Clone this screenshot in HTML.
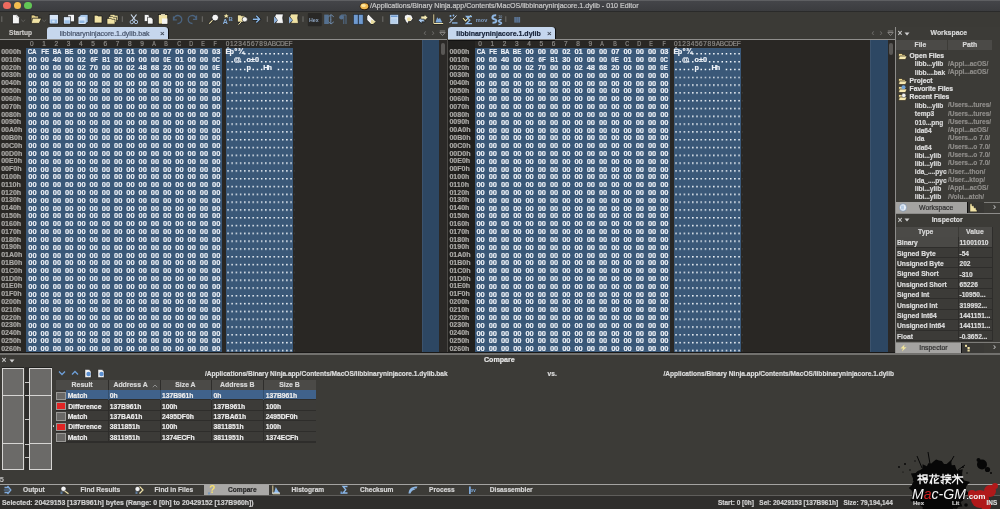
<!DOCTYPE html><html><head><meta charset='utf-8'><style>
*{margin:0;padding:0;box-sizing:border-box}
html,body{width:1000px;height:509px;overflow:hidden;background:#3c3b37}
body{position:relative;will-change:transform;font-family:"Liberation Sans",sans-serif;color:#d8d8d8}
.a{position:absolute}
.t{position:absolute;white-space:pre;line-height:1;-webkit-text-stroke-width:0.2px}
.hx i{display:inline-block;text-align:center;font-style:normal}
.hc i{width:12.26px}
.ac i{width:4.21px}
.hc i.n{transform:scaleX(.82)}
</style></head><body><div class="a" style="left:0.00px;top:0.00px;width:1000.00px;height:11.00px;background:linear-gradient(#45464a,#3b3c3f)"></div>
<div class="a" style="left:0.00px;top:0.00px;width:1000.00px;height:0.70px;background:#5e5f62"></div>
<div class="a" style="left:0.00px;top:10.60px;width:1000.00px;height:1.00px;background:#2a2a2a"></div>
<div class="a" style="left:3.40px;top:1.90px;width:7.20px;height:7.20px;background:#ee6a5f;border-radius:50%"></div>
<div class="a" style="left:13.90px;top:1.90px;width:7.20px;height:7.20px;background:#f5be4f;border-radius:50%"></div>
<div class="a" style="left:24.40px;top:1.90px;width:7.20px;height:7.20px;background:#62c655;border-radius:50%"></div>
<svg class="a" style="left:358.50px;top:1.50px;" width="11" height="9" viewBox="0 0 11 9"><ellipse cx="5.5" cy="4.5" rx="4.8" ry="3.8" fill="#2a1a08"/><ellipse cx="5.3" cy="4.3" rx="4" ry="3" fill="#f0b850"/><ellipse cx="4.5" cy="3.6" rx="2.2" ry="1.5" fill="#fde7a0"/></svg>
<div class="t" style="left:370.00px;top:2.72px;font-size:7.1px;color:#c9c9c9;">/Applications/Binary Ninja.app/Contents/MacOS/libbinaryninjacore.1.dylib - 010 Editor</div>
<div class="a" style="left:0.00px;top:11.50px;width:1000.00px;height:15.00px;background:#3b3a36"></div>
<div class="a" style="left:0.00px;top:26.50px;width:896.00px;height:13.00px;background:#3b3a36"></div>
<svg class="a" style="left:0;top:11px" width="530" height="16" viewBox="0 11 530 16"><rect x="1.3" y="16.3" width="1" height="5.6" fill="#6f6e6b"/><path d="M12.5 14.6 H16.8 L19.4 17.2 V23.8 H12.5 Z" fill="#f4f4f4" stroke="#141414" stroke-width="0.7"/><path d="M16.8 14.6 V17.2 H19.4" fill="none" stroke="#999" stroke-width="0.5"/><path d="M21.2 19.7 L23.2 21.6 L25.2 19.7" fill="none" stroke="#6c6b69" stroke-width="0.7"/><path d="M31.2 15 H34.3 L35.3 16 H38.6 V23.3 H31.2 Z" fill="#e4d08a" stroke="#141414" stroke-width="0.7"/><path d="M32.6 18.2 H41.6 L39.2 23.4 H31.2 Z" fill="#f0e2a4" stroke="#141414" stroke-width="0.7"/><path d="M42.2 19.7 L44.2 21.6 L46.2 19.7" fill="none" stroke="#6c6b69" stroke-width="0.7"/><rect x="49.2" y="14.4" width="9.2" height="9.5" fill="#d6e5f6" stroke="#141414" stroke-width="0.7"/><rect x="50.5" y="19.5" width="6.6" height="3.8" fill="#9cc0e8"/><rect x="52.2" y="20.5" width="2.5" height="2" fill="#d6e5f6"/><rect x="67.8" y="14.3" width="6.5" height="7.5" fill="#f4f4f4" stroke="#141414" stroke-width="0.6"/><rect x="63.5" y="16.8" width="7.2" height="7.2" fill="#d6e5f6" stroke="#141414" stroke-width="0.6"/><rect x="64.5" y="20.3" width="5.2" height="3" fill="#9cc0e8"/><path d="M78.5 17 L81 14.5 H88 V21.5 L85.5 24 H78.5 Z" fill="#a9c8ea" stroke="#141414" stroke-width="0.6"/><rect x="78.5" y="17" width="7" height="7" fill="#d6e5f6"/><rect x="79.5" y="20.5" width="5" height="2.5" fill="#8fb6e2"/><path d="M94.2 15.2 H97.2 L98 16 H102 V23 H94.2 Z" fill="#f0e2a4" stroke="#141414" stroke-width="0.7"/><path d="M110 14.4 H114 L115 15.3 H118 V20.5 H110 Z" fill="#f0e2a4" stroke="#141414" stroke-width="0.6"/><path d="M108.5 16.4 H112.5 L113.5 17.3 H116.5 V22.5 H108.5 Z" fill="#f0e2a4" stroke="#141414" stroke-width="0.6"/><path d="M107 18.4 H111 L112 19.3 H115 V24.2 H107 Z" fill="#f0e2a4" stroke="#141414" stroke-width="0.6"/><rect x="121.8" y="16.3" width="1" height="5.6" fill="#6f6e6b"/><path d="M131 14.5 L135.5 20.5 M136.5 14.5 L132 20.5" stroke="#c8d6e8" stroke-width="1.2"/><circle cx="131.8" cy="22" r="1.7" fill="none" stroke="#a6bcd8" stroke-width="1"/><circle cx="136" cy="22" r="1.7" fill="none" stroke="#a6bcd8" stroke-width="1"/><path d="M144.3 14.5 H148 L149.5 16 V21.5 H144.3 Z" fill="#f4f4f4" stroke="#141414" stroke-width="0.6"/><path d="M147.5 17.2 H151 L153 19.2 V24 H147.5 Z" fill="#f4f4f4" stroke="#141414" stroke-width="0.6"/><rect x="158.3" y="14.6" width="9.4" height="9.4" fill="#f0e2a4" stroke="#141414" stroke-width="0.7"/><rect x="162" y="18.5" width="5.4" height="5.3" fill="#f4f4f4"/><rect x="161" y="14" width="4" height="1.6" fill="#d8d0b0"/><path d="M173.5 16.5 L173.5 19.8 L176.8 19.8 M173.8 19.5 A4 4 0 1 1 177.5 23.5" fill="none" stroke="#4b6480" stroke-width="1.3"/><path d="M196.5 15.5 L196.5 19.3 L193 19.3 M196.2 19 A4 4 0 1 0 192.5 23.5" fill="none" stroke="#4b6480" stroke-width="1.3"/><rect x="201.8" y="16.3" width="1" height="5.6" fill="#6f6e6b"/><line x1="209.3" y1="23.6" x2="212.7" y2="20.2" stroke="#141414" stroke-width="2.2"/><line x1="209.3" y1="23.6" x2="212.7" y2="20.2" stroke="#efe2a8" stroke-width="1.2"/><circle cx="215.2" cy="17.6" r="3.4" fill="#f4f4f4" stroke="#141414" stroke-width="0.8"/><path d="M226.2 13.8 L227 15.3 L228.6 15.4 L227.4 16.4 L227.8 18 L226.2 17.1 L224.6 18 L225 16.4 L223.8 15.4 L225.4 15.3 Z" fill="#f2e6a8"/><text x="222.8" y="24.2" font-size="7" font-weight="bold" fill="#8ab2e0" font-family="Liberation Sans">A</text><text x="228.6" y="21.4" font-size="6" font-weight="bold" fill="#7aa0cc" font-family="Liberation Sans">B</text><path d="M237.5 15 H240.5 L241.3 15.8 H245 V22 H237.5 Z" fill="#f0e2a4" stroke="#141414" stroke-width="0.6"/><line x1="238.5" y1="24.5" x2="241.5" y2="21.5" stroke="#efe2a8" stroke-width="1"/><circle cx="244.8" cy="19.3" r="2.6" fill="#f4f4f4" stroke="#141414" stroke-width="0.6"/><path d="M252.5 19.2 H259.5 M256.3 15.8 L259.8 19.2 L256.3 22.6" fill="none" stroke="#141414" stroke-width="2.4"/><path d="M252.8 19.2 H259.3 M256.3 15.8 L259.6 19.2 L256.3 22.6" fill="none" stroke="#8cb8e8" stroke-width="1.4"/><rect x="266.8" y="16.3" width="1" height="5.6" fill="#6f6e6b"/><path d="M275.6 14 H283.4 L282.7 17.8 L283.5 23.4 H275.4 L277.4 20.3 L274.8 16.8 Z" fill="#f4f4f4" stroke="#141414" stroke-width="0.7"/><path d="M274.0 16.6 L277.6 20.3 L274.0 23.6 Z" fill="#8fb2dc"/><path d="M290.6 14 H298.4 L297.7 17.8 L298.5 23.4 H290.4 L292.4 20.3 L289.8 16.8 Z" fill="#f0e2a4" stroke="#141414" stroke-width="0.7"/><path d="M289.0 16.6 L292.6 20.3 L289.0 23.6 Z" fill="#8fb2dc"/><rect x="302.5" y="16.3" width="1" height="5.6" fill="#6f6e6b"/><rect x="307.8" y="13" width="14" height="13.2" rx="1" fill="#292826"/><text x="309" y="21.6" font-size="5.3" font-weight="bold" fill="#8ea4c0" font-family="Liberation Sans">Hex</text><rect x="324.2" y="14.6" width="4.6" height="9.4" fill="#55708f"/><path d="M328.5 16.8 L331 14.6 L333.8 16.8 M330.8 15 V19.5 M328.5 21.8 L331 24 L333.8 21.8 M330.8 23.6 V19" fill="none" stroke="#6c88a8" stroke-width="1"/><path d="M341.2 15 H346 V24 M343.8 15 V24" fill="none" stroke="#55708f" stroke-width="1"/><circle cx="341.5" cy="17.3" r="2.3" fill="#55708f"/><rect x="353.6" y="14.6" width="4.5" height="9.6" fill="#6f9ad0" stroke="#1a2636" stroke-width="0.5"/><rect x="358.6" y="14.6" width="4.5" height="9.6" fill="#6f9ad0" stroke="#1a2636" stroke-width="0.5"/><path d="M366.8 16 L368.6 14.3 L375.7 21.4 L373 24.1 L370.8 24.1 L366.8 20 Z" fill="#f4f4f4" stroke="#141414" stroke-width="0.7"/><path d="M371.2 19.5 L375.7 21.4 L373 24.1 L370.8 24.1 Z" fill="#e8dca0"/><rect x="382.3" y="16.3" width="1" height="5.6" fill="#6f6e6b"/><rect x="389.9" y="14.5" width="8.6" height="9.7" fill="#d6e5f6" stroke="#1a2636" stroke-width="0.6"/><rect x="390.8" y="15.4" width="6.8" height="1.8" fill="#6f9ad0"/><rect x="391" y="18.3" width="6.3" height="5" fill="#b7d0ec"/><path d="M404.5 15.5 L407.5 14.3 L411.5 15 L413 18.5 L411 21.5 L408.5 21.5 L407.5 24.3 L405.5 21.2 L404.3 18.5 Z" fill="#f4f4f4" stroke="#141414" stroke-width="0.7"/><circle cx="409" cy="19.3" r="2" fill="#f0e2a4"/><path d="M418.3 20.3 L421.8 16.8 V18.8 H425 V21.8 H421.8 V23.8 Z" fill="#a8c8ec" stroke="#141414" stroke-width="0.6"/><path d="M427.8 17.6 L424.3 14.1 V16.1 H420.8 V19.1 H424.3 V21.1 Z" fill="#f4eab4" stroke="#141414" stroke-width="0.6"/><path d="M433.8 14.3 V23.5 H443.2" fill="none" stroke="#141414" stroke-width="1.8"/><path d="M433.8 14.3 V23.5 H443.2" fill="none" stroke="#efe2a8" stroke-width="1"/><path d="M435.5 22.6 L437.2 17.2 L438.5 19 L440 18 L442.3 22.6 Z" fill="#7ea9da"/><path d="M449.5 23 L456.5 15.5" stroke="#c8d8ec" stroke-width="1"/><circle cx="450.5" cy="16" r="1" fill="#8cb8e8"/><circle cx="453.5" cy="15.5" r="0.9" fill="#8cb8e8"/><rect x="452" y="22.3" width="5.5" height="1.3" fill="#8cb8e8"/><circle cx="451" cy="19.5" r="0.9" fill="#8cb8e8"/><path d="M463 18.2 L465.5 20.8 L470.8 15.3" fill="none" stroke="#141414" stroke-width="2"/><path d="M463 18.2 L465.5 20.8 L470.8 15.3" fill="none" stroke="#f2e6a8" stroke-width="1.2"/><path d="M472 16.5 H466.5 L469.8 20.2 L466.3 23.7 H472" fill="none" stroke="#8cb8e8" stroke-width="1.3"/><text x="475.8" y="21.7" font-size="5.6" font-weight="bold" fill="#7f9fc8" font-family="Liberation Sans">mov</text><path d="M496.2 15.2 C491.5 15 491.5 18.5 494.5 19.3 C497.5 20 497 23 492.5 22.8" fill="none" stroke="#90b8e4" stroke-width="2"/><path d="M501.5 19.5 C498 19.5 498 21.8 500.2 22.2 C502.2 22.6 501.8 24.5 498.5 24.5" fill="none" stroke="#90b8e4" stroke-width="1.6"/><text x="498.2" y="17.6" font-size="3.6" fill="#8fb0d8" font-family="Liberation Sans">10</text><rect x="505.3" y="16.3" width="1" height="5.6" fill="#6f6e6b"/><rect x="514.3" y="17" width="5.8" height="5.6" fill="#5f7898"/><path d="M516.2 17 V22.6 M518.2 17 V22.6" stroke="#3a4a5c" stroke-width="0.5"/></svg>
<div class="a" style="left:47.00px;top:27.20px;width:121.40px;height:13.00px;background:#c6d7ee;border-radius:3px 3px 0 0;box-shadow:1px 0 0 #111"></div>
<div class="t" style="left:59.70px;top:30.07px;font-size:7.0px;color:#46536a;">libbinaryninjacore.1.dylib.bak</div>
<div class="t" style="left:159.90px;top:30.28px;font-size:8px;color:#3a4250;">×</div>
<div class="a" style="left:0.00px;top:39.30px;width:447.00px;height:1.00px;background:#8f8e8c"></div>
<div class="a" style="left:0.00px;top:40.30px;width:447.00px;height:312.20px;background:#292724"></div>
<div class="t hx" style="left:25.67px;top:40.81px;font-size:6.5px;color:#8c8a87"><span class="hc"><i>0</i><i>1</i><i>2</i><i>3</i><i>4</i><i>5</i><i>6</i><i>7</i><i>8</i><i>9</i><i class='n'>A</i><i class='n'>B</i><i class='n'>C</i><i class='n'>D</i><i class='n'>E</i><i class='n'>F</i></span></div>
<div class="t hx" style="left:225.40px;top:40.81px;font-size:6.5px;color:#8c8a87"><span class="ac"><i>0</i><i>1</i><i>2</i><i>3</i><i>4</i><i>5</i><i>6</i><i>7</i><i>8</i><i>9</i><i>A</i><i>B</i><i>C</i><i>D</i><i>E</i><i>F</i></span></div>
<div class="a" style="left:25.80px;top:47.70px;width:196.00px;height:304.59px;background:#3a5878"></div>
<div class="a" style="left:225.70px;top:47.70px;width:67.20px;height:304.59px;background:#3a5878"></div>
<div class="t" style="left:1.20px;top:48.00px;font-size:7.05px;line-height:7.805px;color:#aaa8a5;font-weight:bold">0000h<br>0010h<br>0020h<br>0030h<br>0040h<br>0050h<br>0060h<br>0070h<br>0080h<br>0090h<br>00A0h<br>00B0h<br>00C0h<br>00D0h<br>00E0h<br>00F0h<br>0100h<br>0110h<br>0120h<br>0130h<br>0140h<br>0150h<br>0160h<br>0170h<br>0180h<br>0190h<br>01A0h<br>01B0h<br>01C0h<br>01D0h<br>01E0h<br>01F0h<br>0200h<br>0210h<br>0220h<br>0230h<br>0240h<br>0250h<br>0260h</div>
<div class="t hx" style="left:26.30px;top:48.40px;font-size:7.5px;line-height:7.805px;color:#eef2f8;font-weight:bold;-webkit-text-stroke:0.15px #eef2f8"><span class="hc"><i class='n'>CA</i><i class='n'>FE</i><i class='n'>BA</i><i class='n'>BE</i><i>00</i><i>00</i><i>00</i><i>02</i><i>01</i><i>00</i><i>00</i><i>07</i><i>00</i><i>00</i><i>00</i><i>03</i></span><br><span class="hc"><i>00</i><i>00</i><i>40</i><i>00</i><i>02</i><i class='n'>6F</i><i class='n'>B1</i><i>30</i><i>00</i><i>00</i><i>00</i><i class='n'>0E</i><i>01</i><i>00</i><i>00</i><i class='n'>0C</i></span><br><span class="hc"><i>00</i><i>00</i><i>00</i><i>00</i><i>02</i><i>70</i><i>00</i><i>00</i><i>02</i><i>48</i><i>68</i><i>20</i><i>00</i><i>00</i><i>00</i><i class='n'>0E</i></span><br><span class="hc"><i>00</i><i>00</i><i>00</i><i>00</i><i>00</i><i>00</i><i>00</i><i>00</i><i>00</i><i>00</i><i>00</i><i>00</i><i>00</i><i>00</i><i>00</i><i>00</i></span><br><span class="hc"><i>00</i><i>00</i><i>00</i><i>00</i><i>00</i><i>00</i><i>00</i><i>00</i><i>00</i><i>00</i><i>00</i><i>00</i><i>00</i><i>00</i><i>00</i><i>00</i></span><br><span class="hc"><i>00</i><i>00</i><i>00</i><i>00</i><i>00</i><i>00</i><i>00</i><i>00</i><i>00</i><i>00</i><i>00</i><i>00</i><i>00</i><i>00</i><i>00</i><i>00</i></span><br><span class="hc"><i>00</i><i>00</i><i>00</i><i>00</i><i>00</i><i>00</i><i>00</i><i>00</i><i>00</i><i>00</i><i>00</i><i>00</i><i>00</i><i>00</i><i>00</i><i>00</i></span><br><span class="hc"><i>00</i><i>00</i><i>00</i><i>00</i><i>00</i><i>00</i><i>00</i><i>00</i><i>00</i><i>00</i><i>00</i><i>00</i><i>00</i><i>00</i><i>00</i><i>00</i></span><br><span class="hc"><i>00</i><i>00</i><i>00</i><i>00</i><i>00</i><i>00</i><i>00</i><i>00</i><i>00</i><i>00</i><i>00</i><i>00</i><i>00</i><i>00</i><i>00</i><i>00</i></span><br><span class="hc"><i>00</i><i>00</i><i>00</i><i>00</i><i>00</i><i>00</i><i>00</i><i>00</i><i>00</i><i>00</i><i>00</i><i>00</i><i>00</i><i>00</i><i>00</i><i>00</i></span><br><span class="hc"><i>00</i><i>00</i><i>00</i><i>00</i><i>00</i><i>00</i><i>00</i><i>00</i><i>00</i><i>00</i><i>00</i><i>00</i><i>00</i><i>00</i><i>00</i><i>00</i></span><br><span class="hc"><i>00</i><i>00</i><i>00</i><i>00</i><i>00</i><i>00</i><i>00</i><i>00</i><i>00</i><i>00</i><i>00</i><i>00</i><i>00</i><i>00</i><i>00</i><i>00</i></span><br><span class="hc"><i>00</i><i>00</i><i>00</i><i>00</i><i>00</i><i>00</i><i>00</i><i>00</i><i>00</i><i>00</i><i>00</i><i>00</i><i>00</i><i>00</i><i>00</i><i>00</i></span><br><span class="hc"><i>00</i><i>00</i><i>00</i><i>00</i><i>00</i><i>00</i><i>00</i><i>00</i><i>00</i><i>00</i><i>00</i><i>00</i><i>00</i><i>00</i><i>00</i><i>00</i></span><br><span class="hc"><i>00</i><i>00</i><i>00</i><i>00</i><i>00</i><i>00</i><i>00</i><i>00</i><i>00</i><i>00</i><i>00</i><i>00</i><i>00</i><i>00</i><i>00</i><i>00</i></span><br><span class="hc"><i>00</i><i>00</i><i>00</i><i>00</i><i>00</i><i>00</i><i>00</i><i>00</i><i>00</i><i>00</i><i>00</i><i>00</i><i>00</i><i>00</i><i>00</i><i>00</i></span><br><span class="hc"><i>00</i><i>00</i><i>00</i><i>00</i><i>00</i><i>00</i><i>00</i><i>00</i><i>00</i><i>00</i><i>00</i><i>00</i><i>00</i><i>00</i><i>00</i><i>00</i></span><br><span class="hc"><i>00</i><i>00</i><i>00</i><i>00</i><i>00</i><i>00</i><i>00</i><i>00</i><i>00</i><i>00</i><i>00</i><i>00</i><i>00</i><i>00</i><i>00</i><i>00</i></span><br><span class="hc"><i>00</i><i>00</i><i>00</i><i>00</i><i>00</i><i>00</i><i>00</i><i>00</i><i>00</i><i>00</i><i>00</i><i>00</i><i>00</i><i>00</i><i>00</i><i>00</i></span><br><span class="hc"><i>00</i><i>00</i><i>00</i><i>00</i><i>00</i><i>00</i><i>00</i><i>00</i><i>00</i><i>00</i><i>00</i><i>00</i><i>00</i><i>00</i><i>00</i><i>00</i></span><br><span class="hc"><i>00</i><i>00</i><i>00</i><i>00</i><i>00</i><i>00</i><i>00</i><i>00</i><i>00</i><i>00</i><i>00</i><i>00</i><i>00</i><i>00</i><i>00</i><i>00</i></span><br><span class="hc"><i>00</i><i>00</i><i>00</i><i>00</i><i>00</i><i>00</i><i>00</i><i>00</i><i>00</i><i>00</i><i>00</i><i>00</i><i>00</i><i>00</i><i>00</i><i>00</i></span><br><span class="hc"><i>00</i><i>00</i><i>00</i><i>00</i><i>00</i><i>00</i><i>00</i><i>00</i><i>00</i><i>00</i><i>00</i><i>00</i><i>00</i><i>00</i><i>00</i><i>00</i></span><br><span class="hc"><i>00</i><i>00</i><i>00</i><i>00</i><i>00</i><i>00</i><i>00</i><i>00</i><i>00</i><i>00</i><i>00</i><i>00</i><i>00</i><i>00</i><i>00</i><i>00</i></span><br><span class="hc"><i>00</i><i>00</i><i>00</i><i>00</i><i>00</i><i>00</i><i>00</i><i>00</i><i>00</i><i>00</i><i>00</i><i>00</i><i>00</i><i>00</i><i>00</i><i>00</i></span><br><span class="hc"><i>00</i><i>00</i><i>00</i><i>00</i><i>00</i><i>00</i><i>00</i><i>00</i><i>00</i><i>00</i><i>00</i><i>00</i><i>00</i><i>00</i><i>00</i><i>00</i></span><br><span class="hc"><i>00</i><i>00</i><i>00</i><i>00</i><i>00</i><i>00</i><i>00</i><i>00</i><i>00</i><i>00</i><i>00</i><i>00</i><i>00</i><i>00</i><i>00</i><i>00</i></span><br><span class="hc"><i>00</i><i>00</i><i>00</i><i>00</i><i>00</i><i>00</i><i>00</i><i>00</i><i>00</i><i>00</i><i>00</i><i>00</i><i>00</i><i>00</i><i>00</i><i>00</i></span><br><span class="hc"><i>00</i><i>00</i><i>00</i><i>00</i><i>00</i><i>00</i><i>00</i><i>00</i><i>00</i><i>00</i><i>00</i><i>00</i><i>00</i><i>00</i><i>00</i><i>00</i></span><br><span class="hc"><i>00</i><i>00</i><i>00</i><i>00</i><i>00</i><i>00</i><i>00</i><i>00</i><i>00</i><i>00</i><i>00</i><i>00</i><i>00</i><i>00</i><i>00</i><i>00</i></span><br><span class="hc"><i>00</i><i>00</i><i>00</i><i>00</i><i>00</i><i>00</i><i>00</i><i>00</i><i>00</i><i>00</i><i>00</i><i>00</i><i>00</i><i>00</i><i>00</i><i>00</i></span><br><span class="hc"><i>00</i><i>00</i><i>00</i><i>00</i><i>00</i><i>00</i><i>00</i><i>00</i><i>00</i><i>00</i><i>00</i><i>00</i><i>00</i><i>00</i><i>00</i><i>00</i></span><br><span class="hc"><i>00</i><i>00</i><i>00</i><i>00</i><i>00</i><i>00</i><i>00</i><i>00</i><i>00</i><i>00</i><i>00</i><i>00</i><i>00</i><i>00</i><i>00</i><i>00</i></span><br><span class="hc"><i>00</i><i>00</i><i>00</i><i>00</i><i>00</i><i>00</i><i>00</i><i>00</i><i>00</i><i>00</i><i>00</i><i>00</i><i>00</i><i>00</i><i>00</i><i>00</i></span><br><span class="hc"><i>00</i><i>00</i><i>00</i><i>00</i><i>00</i><i>00</i><i>00</i><i>00</i><i>00</i><i>00</i><i>00</i><i>00</i><i>00</i><i>00</i><i>00</i><i>00</i></span><br><span class="hc"><i>00</i><i>00</i><i>00</i><i>00</i><i>00</i><i>00</i><i>00</i><i>00</i><i>00</i><i>00</i><i>00</i><i>00</i><i>00</i><i>00</i><i>00</i><i>00</i></span><br><span class="hc"><i>00</i><i>00</i><i>00</i><i>00</i><i>00</i><i>00</i><i>00</i><i>00</i><i>00</i><i>00</i><i>00</i><i>00</i><i>00</i><i>00</i><i>00</i><i>00</i></span><br><span class="hc"><i>00</i><i>00</i><i>00</i><i>00</i><i>00</i><i>00</i><i>00</i><i>00</i><i>00</i><i>00</i><i>00</i><i>00</i><i>00</i><i>00</i><i>00</i><i>00</i></span><br><span class="hc"><i>00</i><i>00</i><i>00</i><i>00</i><i>00</i><i>00</i><i>00</i><i>00</i><i>00</i><i>00</i><i>00</i><i>00</i><i>00</i><i>00</i><i>00</i><i>00</i></span></div>
<div class="t hx" style="left:225.40px;top:48.30px;font-size:7.3px;line-height:7.805px;color:#eef2f8;font-weight:bold"><span class="ac"><i>&Ecirc;</i><i>&thorn;</i><i>&ordm;</i><i>&frac34;</i><i></i><i></i><i></i><i></i><i></i><i></i><i></i><i></i><i></i><i></i><i></i><i></i></span><br><span class="ac"><i></i><i></i><i>@</i><i></i><i></i><i>o</i><i>&plusmn;</i><i>0</i><i></i><i></i><i></i><i></i><i></i><i></i><i></i><i></i></span><br><span class="ac"><i></i><i></i><i></i><i></i><i></i><i>p</i><i></i><i></i><i></i><i>H</i><i>h</i><i>&nbsp;</i><i></i><i></i><i></i><i></i></span></div>
<svg class="a" style="left:0.00px;top:0" width="300" height="360" viewBox="0 0 300 360"><defs><pattern id="dots0" patternUnits="userSpaceOnUse" x="227.2" y="53.10" width="4.21" height="7.805"><rect width="1.5" height="1.5" fill="#f4f8fc"/></pattern></defs><path d="M244.04 53.10h1.5v1.5h-1.5zM248.25 53.10h1.5v1.5h-1.5zM252.46 53.10h1.5v1.5h-1.5zM256.67 53.10h1.5v1.5h-1.5zM260.88 53.10h1.5v1.5h-1.5zM265.09 53.10h1.5v1.5h-1.5zM269.30 53.10h1.5v1.5h-1.5zM273.51 53.10h1.5v1.5h-1.5zM277.72 53.10h1.5v1.5h-1.5zM281.93 53.10h1.5v1.5h-1.5zM286.14 53.10h1.5v1.5h-1.5zM290.35 53.10h1.5v1.5h-1.5zM227.20 60.91h1.5v1.5h-1.5zM231.41 60.91h1.5v1.5h-1.5zM239.83 60.91h1.5v1.5h-1.5zM244.04 60.91h1.5v1.5h-1.5zM260.88 60.91h1.5v1.5h-1.5zM265.09 60.91h1.5v1.5h-1.5zM269.30 60.91h1.5v1.5h-1.5zM273.51 60.91h1.5v1.5h-1.5zM277.72 60.91h1.5v1.5h-1.5zM281.93 60.91h1.5v1.5h-1.5zM286.14 60.91h1.5v1.5h-1.5zM290.35 60.91h1.5v1.5h-1.5zM227.20 68.71h1.5v1.5h-1.5zM231.41 68.71h1.5v1.5h-1.5zM235.62 68.71h1.5v1.5h-1.5zM239.83 68.71h1.5v1.5h-1.5zM244.04 68.71h1.5v1.5h-1.5zM252.46 68.71h1.5v1.5h-1.5zM256.67 68.71h1.5v1.5h-1.5zM260.88 68.71h1.5v1.5h-1.5zM277.72 68.71h1.5v1.5h-1.5zM281.93 68.71h1.5v1.5h-1.5zM286.14 68.71h1.5v1.5h-1.5zM290.35 68.71h1.5v1.5h-1.5z" fill="#f4f8fc"/><rect x="227.2" y="76.52" width="67" height="280.98" fill="url(#dots0)"/></svg>
<div class="a" style="left:421.80px;top:40.30px;width:17.50px;height:312.20px;background:#2d4763;border-left:1px solid #3c536d"></div>
<div class="a" style="left:439.30px;top:40.30px;width:8.00px;height:312.20px;background:#2b2927"></div>
<div class="a" style="left:440.80px;top:43.00px;width:4.00px;height:12.40px;background:#5a5856;border-radius:2px"></div>
<div class="a" style="left:446.90px;top:40.30px;width:1.00px;height:312.00px;background:#4a4845"></div>
<div class="a" style="left:0.00px;top:352.30px;width:448.00px;height:1.00px;background:#1a1918"></div>
<div class="a" style="left:448.20px;top:27.20px;width:107.20px;height:13.00px;background:#c6d7ee;border-radius:3px 3px 0 0;box-shadow:1px 0 0 #111"></div>
<div class="t" style="left:456.30px;top:30.07px;font-size:7.0px;color:#18243a;font-weight:bold;">libbinaryninjacore.1.dylib</div>
<div class="t" style="left:546.90px;top:30.28px;font-size:8px;color:#3a4250;">×</div>
<div class="a" style="left:448.20px;top:39.30px;width:447.00px;height:1.00px;background:#8f8e8c"></div>
<div class="a" style="left:448.20px;top:40.30px;width:447.00px;height:312.20px;background:#292724"></div>
<div class="t hx" style="left:473.87px;top:40.81px;font-size:6.5px;color:#8c8a87"><span class="hc"><i>0</i><i>1</i><i>2</i><i>3</i><i>4</i><i>5</i><i>6</i><i>7</i><i>8</i><i>9</i><i class='n'>A</i><i class='n'>B</i><i class='n'>C</i><i class='n'>D</i><i class='n'>E</i><i class='n'>F</i></span></div>
<div class="t hx" style="left:673.60px;top:40.81px;font-size:6.5px;color:#8c8a87"><span class="ac"><i>0</i><i>1</i><i>2</i><i>3</i><i>4</i><i>5</i><i>6</i><i>7</i><i>8</i><i>9</i><i>A</i><i>B</i><i>C</i><i>D</i><i>E</i><i>F</i></span></div>
<div class="a" style="left:474.00px;top:47.70px;width:196.00px;height:304.59px;background:#3a5878"></div>
<div class="a" style="left:673.90px;top:47.70px;width:67.20px;height:304.59px;background:#3a5878"></div>
<div class="t hx" style="left:474.50px;top:48.40px;font-size:7.5px;line-height:7.805px;color:#eef2f8;font-weight:bold;-webkit-text-stroke:0.15px #eef2f8"><span class="hc"><i class='n'>CA</i><i class='n'>FE</i><i class='n'>BA</i><i class='n'>BE</i><i>00</i><i>00</i><i>00</i><i>02</i><i>01</i><i>00</i><i>00</i><i>07</i><i>00</i><i>00</i><i>00</i><i>03</i></span><br><span class="hc"><i>00</i><i>00</i><i>40</i><i>00</i><i>02</i><i class='n'>6F</i><i class='n'>B1</i><i>30</i><i>00</i><i>00</i><i>00</i><i class='n'>0E</i><i>01</i><i>00</i><i>00</i><i class='n'>0C</i></span><br><span class="hc"><i>00</i><i>00</i><i>00</i><i>00</i><i>02</i><i>70</i><i>00</i><i>00</i><i>02</i><i>48</i><i>68</i><i>20</i><i>00</i><i>00</i><i>00</i><i class='n'>0E</i></span><br><span class="hc"><i>00</i><i>00</i><i>00</i><i>00</i><i>00</i><i>00</i><i>00</i><i>00</i><i>00</i><i>00</i><i>00</i><i>00</i><i>00</i><i>00</i><i>00</i><i>00</i></span><br><span class="hc"><i>00</i><i>00</i><i>00</i><i>00</i><i>00</i><i>00</i><i>00</i><i>00</i><i>00</i><i>00</i><i>00</i><i>00</i><i>00</i><i>00</i><i>00</i><i>00</i></span><br><span class="hc"><i>00</i><i>00</i><i>00</i><i>00</i><i>00</i><i>00</i><i>00</i><i>00</i><i>00</i><i>00</i><i>00</i><i>00</i><i>00</i><i>00</i><i>00</i><i>00</i></span><br><span class="hc"><i>00</i><i>00</i><i>00</i><i>00</i><i>00</i><i>00</i><i>00</i><i>00</i><i>00</i><i>00</i><i>00</i><i>00</i><i>00</i><i>00</i><i>00</i><i>00</i></span><br><span class="hc"><i>00</i><i>00</i><i>00</i><i>00</i><i>00</i><i>00</i><i>00</i><i>00</i><i>00</i><i>00</i><i>00</i><i>00</i><i>00</i><i>00</i><i>00</i><i>00</i></span><br><span class="hc"><i>00</i><i>00</i><i>00</i><i>00</i><i>00</i><i>00</i><i>00</i><i>00</i><i>00</i><i>00</i><i>00</i><i>00</i><i>00</i><i>00</i><i>00</i><i>00</i></span><br><span class="hc"><i>00</i><i>00</i><i>00</i><i>00</i><i>00</i><i>00</i><i>00</i><i>00</i><i>00</i><i>00</i><i>00</i><i>00</i><i>00</i><i>00</i><i>00</i><i>00</i></span><br><span class="hc"><i>00</i><i>00</i><i>00</i><i>00</i><i>00</i><i>00</i><i>00</i><i>00</i><i>00</i><i>00</i><i>00</i><i>00</i><i>00</i><i>00</i><i>00</i><i>00</i></span><br><span class="hc"><i>00</i><i>00</i><i>00</i><i>00</i><i>00</i><i>00</i><i>00</i><i>00</i><i>00</i><i>00</i><i>00</i><i>00</i><i>00</i><i>00</i><i>00</i><i>00</i></span><br><span class="hc"><i>00</i><i>00</i><i>00</i><i>00</i><i>00</i><i>00</i><i>00</i><i>00</i><i>00</i><i>00</i><i>00</i><i>00</i><i>00</i><i>00</i><i>00</i><i>00</i></span><br><span class="hc"><i>00</i><i>00</i><i>00</i><i>00</i><i>00</i><i>00</i><i>00</i><i>00</i><i>00</i><i>00</i><i>00</i><i>00</i><i>00</i><i>00</i><i>00</i><i>00</i></span><br><span class="hc"><i>00</i><i>00</i><i>00</i><i>00</i><i>00</i><i>00</i><i>00</i><i>00</i><i>00</i><i>00</i><i>00</i><i>00</i><i>00</i><i>00</i><i>00</i><i>00</i></span><br><span class="hc"><i>00</i><i>00</i><i>00</i><i>00</i><i>00</i><i>00</i><i>00</i><i>00</i><i>00</i><i>00</i><i>00</i><i>00</i><i>00</i><i>00</i><i>00</i><i>00</i></span><br><span class="hc"><i>00</i><i>00</i><i>00</i><i>00</i><i>00</i><i>00</i><i>00</i><i>00</i><i>00</i><i>00</i><i>00</i><i>00</i><i>00</i><i>00</i><i>00</i><i>00</i></span><br><span class="hc"><i>00</i><i>00</i><i>00</i><i>00</i><i>00</i><i>00</i><i>00</i><i>00</i><i>00</i><i>00</i><i>00</i><i>00</i><i>00</i><i>00</i><i>00</i><i>00</i></span><br><span class="hc"><i>00</i><i>00</i><i>00</i><i>00</i><i>00</i><i>00</i><i>00</i><i>00</i><i>00</i><i>00</i><i>00</i><i>00</i><i>00</i><i>00</i><i>00</i><i>00</i></span><br><span class="hc"><i>00</i><i>00</i><i>00</i><i>00</i><i>00</i><i>00</i><i>00</i><i>00</i><i>00</i><i>00</i><i>00</i><i>00</i><i>00</i><i>00</i><i>00</i><i>00</i></span><br><span class="hc"><i>00</i><i>00</i><i>00</i><i>00</i><i>00</i><i>00</i><i>00</i><i>00</i><i>00</i><i>00</i><i>00</i><i>00</i><i>00</i><i>00</i><i>00</i><i>00</i></span><br><span class="hc"><i>00</i><i>00</i><i>00</i><i>00</i><i>00</i><i>00</i><i>00</i><i>00</i><i>00</i><i>00</i><i>00</i><i>00</i><i>00</i><i>00</i><i>00</i><i>00</i></span><br><span class="hc"><i>00</i><i>00</i><i>00</i><i>00</i><i>00</i><i>00</i><i>00</i><i>00</i><i>00</i><i>00</i><i>00</i><i>00</i><i>00</i><i>00</i><i>00</i><i>00</i></span><br><span class="hc"><i>00</i><i>00</i><i>00</i><i>00</i><i>00</i><i>00</i><i>00</i><i>00</i><i>00</i><i>00</i><i>00</i><i>00</i><i>00</i><i>00</i><i>00</i><i>00</i></span><br><span class="hc"><i>00</i><i>00</i><i>00</i><i>00</i><i>00</i><i>00</i><i>00</i><i>00</i><i>00</i><i>00</i><i>00</i><i>00</i><i>00</i><i>00</i><i>00</i><i>00</i></span><br><span class="hc"><i>00</i><i>00</i><i>00</i><i>00</i><i>00</i><i>00</i><i>00</i><i>00</i><i>00</i><i>00</i><i>00</i><i>00</i><i>00</i><i>00</i><i>00</i><i>00</i></span><br><span class="hc"><i>00</i><i>00</i><i>00</i><i>00</i><i>00</i><i>00</i><i>00</i><i>00</i><i>00</i><i>00</i><i>00</i><i>00</i><i>00</i><i>00</i><i>00</i><i>00</i></span><br><span class="hc"><i>00</i><i>00</i><i>00</i><i>00</i><i>00</i><i>00</i><i>00</i><i>00</i><i>00</i><i>00</i><i>00</i><i>00</i><i>00</i><i>00</i><i>00</i><i>00</i></span><br><span class="hc"><i>00</i><i>00</i><i>00</i><i>00</i><i>00</i><i>00</i><i>00</i><i>00</i><i>00</i><i>00</i><i>00</i><i>00</i><i>00</i><i>00</i><i>00</i><i>00</i></span><br><span class="hc"><i>00</i><i>00</i><i>00</i><i>00</i><i>00</i><i>00</i><i>00</i><i>00</i><i>00</i><i>00</i><i>00</i><i>00</i><i>00</i><i>00</i><i>00</i><i>00</i></span><br><span class="hc"><i>00</i><i>00</i><i>00</i><i>00</i><i>00</i><i>00</i><i>00</i><i>00</i><i>00</i><i>00</i><i>00</i><i>00</i><i>00</i><i>00</i><i>00</i><i>00</i></span><br><span class="hc"><i>00</i><i>00</i><i>00</i><i>00</i><i>00</i><i>00</i><i>00</i><i>00</i><i>00</i><i>00</i><i>00</i><i>00</i><i>00</i><i>00</i><i>00</i><i>00</i></span><br><span class="hc"><i>00</i><i>00</i><i>00</i><i>00</i><i>00</i><i>00</i><i>00</i><i>00</i><i>00</i><i>00</i><i>00</i><i>00</i><i>00</i><i>00</i><i>00</i><i>00</i></span><br><span class="hc"><i>00</i><i>00</i><i>00</i><i>00</i><i>00</i><i>00</i><i>00</i><i>00</i><i>00</i><i>00</i><i>00</i><i>00</i><i>00</i><i>00</i><i>00</i><i>00</i></span><br><span class="hc"><i>00</i><i>00</i><i>00</i><i>00</i><i>00</i><i>00</i><i>00</i><i>00</i><i>00</i><i>00</i><i>00</i><i>00</i><i>00</i><i>00</i><i>00</i><i>00</i></span><br><span class="hc"><i>00</i><i>00</i><i>00</i><i>00</i><i>00</i><i>00</i><i>00</i><i>00</i><i>00</i><i>00</i><i>00</i><i>00</i><i>00</i><i>00</i><i>00</i><i>00</i></span><br><span class="hc"><i>00</i><i>00</i><i>00</i><i>00</i><i>00</i><i>00</i><i>00</i><i>00</i><i>00</i><i>00</i><i>00</i><i>00</i><i>00</i><i>00</i><i>00</i><i>00</i></span><br><span class="hc"><i>00</i><i>00</i><i>00</i><i>00</i><i>00</i><i>00</i><i>00</i><i>00</i><i>00</i><i>00</i><i>00</i><i>00</i><i>00</i><i>00</i><i>00</i><i>00</i></span><br><span class="hc"><i>00</i><i>00</i><i>00</i><i>00</i><i>00</i><i>00</i><i>00</i><i>00</i><i>00</i><i>00</i><i>00</i><i>00</i><i>00</i><i>00</i><i>00</i><i>00</i></span></div>
<div class="t hx" style="left:673.60px;top:48.30px;font-size:7.3px;line-height:7.805px;color:#eef2f8;font-weight:bold"><span class="ac"><i>&Ecirc;</i><i>&thorn;</i><i>&ordm;</i><i>&frac34;</i><i></i><i></i><i></i><i></i><i></i><i></i><i></i><i></i><i></i><i></i><i></i><i></i></span><br><span class="ac"><i></i><i></i><i>@</i><i></i><i></i><i>o</i><i>&plusmn;</i><i>0</i><i></i><i></i><i></i><i></i><i></i><i></i><i></i><i></i></span><br><span class="ac"><i></i><i></i><i></i><i></i><i></i><i>p</i><i></i><i></i><i></i><i>H</i><i>h</i><i>&nbsp;</i><i></i><i></i><i></i><i></i></span></div>
<svg class="a" style="left:448.20px;top:0" width="300" height="360" viewBox="0 0 300 360"><defs><pattern id="dots448" patternUnits="userSpaceOnUse" x="227.2" y="53.10" width="4.21" height="7.805"><rect width="1.5" height="1.5" fill="#f4f8fc"/></pattern></defs><path d="M244.04 53.10h1.5v1.5h-1.5zM248.25 53.10h1.5v1.5h-1.5zM252.46 53.10h1.5v1.5h-1.5zM256.67 53.10h1.5v1.5h-1.5zM260.88 53.10h1.5v1.5h-1.5zM265.09 53.10h1.5v1.5h-1.5zM269.30 53.10h1.5v1.5h-1.5zM273.51 53.10h1.5v1.5h-1.5zM277.72 53.10h1.5v1.5h-1.5zM281.93 53.10h1.5v1.5h-1.5zM286.14 53.10h1.5v1.5h-1.5zM290.35 53.10h1.5v1.5h-1.5zM227.20 60.91h1.5v1.5h-1.5zM231.41 60.91h1.5v1.5h-1.5zM239.83 60.91h1.5v1.5h-1.5zM244.04 60.91h1.5v1.5h-1.5zM260.88 60.91h1.5v1.5h-1.5zM265.09 60.91h1.5v1.5h-1.5zM269.30 60.91h1.5v1.5h-1.5zM273.51 60.91h1.5v1.5h-1.5zM277.72 60.91h1.5v1.5h-1.5zM281.93 60.91h1.5v1.5h-1.5zM286.14 60.91h1.5v1.5h-1.5zM290.35 60.91h1.5v1.5h-1.5zM227.20 68.71h1.5v1.5h-1.5zM231.41 68.71h1.5v1.5h-1.5zM235.62 68.71h1.5v1.5h-1.5zM239.83 68.71h1.5v1.5h-1.5zM244.04 68.71h1.5v1.5h-1.5zM252.46 68.71h1.5v1.5h-1.5zM256.67 68.71h1.5v1.5h-1.5zM260.88 68.71h1.5v1.5h-1.5zM277.72 68.71h1.5v1.5h-1.5zM281.93 68.71h1.5v1.5h-1.5zM286.14 68.71h1.5v1.5h-1.5zM290.35 68.71h1.5v1.5h-1.5z" fill="#f4f8fc"/><rect x="227.2" y="76.52" width="67" height="280.98" fill="url(#dots448)"/></svg>
<div class="a" style="left:870.00px;top:40.30px;width:17.50px;height:312.20px;background:#2d4763;border-left:1px solid #3c536d"></div>
<div class="a" style="left:887.50px;top:40.30px;width:8.00px;height:312.20px;background:#2b2927"></div>
<div class="a" style="left:889.00px;top:43.00px;width:4.00px;height:12.40px;background:#5a5856;border-radius:2px"></div>
<div class="a" style="left:895.10px;top:40.30px;width:1.00px;height:312.00px;background:#4a4845"></div>
<div class="a" style="left:448.20px;top:352.30px;width:448.00px;height:1.00px;background:#1a1918"></div>
<div class="a" style="left:448.20px;top:40.50px;width:26.60px;height:311.80px;background:#21201e"></div>
<div class="a" style="left:448.20px;top:40.20px;width:107.20px;height:0.90px;background:#111"></div>
<div class="t" style="left:449.40px;top:48.00px;font-size:7.05px;line-height:7.805px;color:#aaa8a5;font-weight:bold">0000h<br>0010h<br>0020h<br>0030h<br>0040h<br>0050h<br>0060h<br>0070h<br>0080h<br>0090h<br>00A0h<br>00B0h<br>00C0h<br>00D0h<br>00E0h<br>00F0h<br>0100h<br>0110h<br>0120h<br>0130h<br>0140h<br>0150h<br>0160h<br>0170h<br>0180h<br>0190h<br>01A0h<br>01B0h<br>01C0h<br>01D0h<br>01E0h<br>01F0h<br>0200h<br>0210h<br>0220h<br>0230h<br>0240h<br>0250h<br>0260h</div>
<div class="t" style="left:9.00px;top:30.37px;font-size:6.6px;color:#c8c6c4;font-weight:bold;">Startup</div>
<div class="t" style="left:423.50px;top:29.09px;font-size:9px;color:#6a6866;">‹</div>
<div class="t" style="left:431.50px;top:29.09px;font-size:9px;color:#6a6866;">›</div>
<svg class="a" style="left:439.00px;top:30.00px;" width="7" height="7" viewBox="0 0 7 7"><path d="M0.8 1 H6.2 M0.8 2.5 L3.5 5.5 L6.2 2.5 Z" stroke="#8a8886" stroke-width="0.9" fill="none"/></svg>
<div class="t" style="left:871.50px;top:29.09px;font-size:9px;color:#6a6866;">‹</div>
<div class="t" style="left:879.50px;top:29.09px;font-size:9px;color:#6a6866;">›</div>
<svg class="a" style="left:887.00px;top:30.00px;" width="7" height="7" viewBox="0 0 7 7"><path d="M0.8 1 H6.2 M0.8 2.5 L3.5 5.5 L6.2 2.5 Z" stroke="#8a8886" stroke-width="0.9" fill="none"/></svg>
<div class="a" style="left:895.60px;top:26.50px;width:104.40px;height:330.00px;background:#3c3b37"></div>
<div class="a" style="left:894.80px;top:26.50px;width:1.00px;height:330.00px;background:#8d8c8a"></div>
<div class="t" style="left:897.50px;top:29.23px;font-size:8.5px;color:#d0d0d0;">×</div>
<svg class="a" style="left:904.00px;top:31.50px;" width="6" height="4" viewBox="0 0 6 4"><path d="M0.5 0.5 L5.5 0.5 L3 3.5 Z" fill="#d0d0d0"/></svg>
<div class="t" style="left:930.50px;top:30.02px;font-size:6.9px;color:#d6d6d6;font-weight:bold;">Workspace</div>
<div class="a" style="left:896.00px;top:39.90px;width:95.80px;height:10.40px;background:#4b4a47"></div>
<div class="a" style="left:947.30px;top:39.90px;width:0.80px;height:10.40px;background:#3c3b37"></div>
<div class="t" style="left:914.50px;top:41.87px;font-size:6.8px;color:#d6d6d6;font-weight:bold;">File</div>
<div class="t" style="left:962.50px;top:41.87px;font-size:6.8px;color:#d6d6d6;font-weight:bold;">Path</div>
<svg class="a" style="left:898.00px;top:51.60px;" width="10" height="9" viewBox="0 0 10 9"><path d="M0.5 1.5 H3.5 L4.5 2.5 H7.5 V7.5 H0.5 Z" fill="#e9d58f" stroke="#1c1a16" stroke-width="0.6"/><path d="M1.5 4 H9 L7.5 7.5 H0.5 Z" fill="#f7e9b0" stroke="#1c1a16" stroke-width="0.6"/></svg>
<div class="t" style="left:909.60px;top:52.79px;font-size:6.75px;color:#e0e0e0;font-weight:bold;">Open Files</div>
<div class="t" style="left:914.80px;top:61.20px;font-size:6.6px;color:#d8d8d8;font-weight:bold;">libb...ylib</div>
<div class="t" style="left:947.90px;top:60.52px;font-size:6.55px;color:#8e8c89;font-weight:bold;">/Appl...acOS/</div>
<div class="t" style="left:914.80px;top:69.53px;font-size:6.6px;color:#d8d8d8;font-weight:bold;">libb....bak</div>
<div class="t" style="left:947.90px;top:68.85px;font-size:6.55px;color:#8e8c89;font-weight:bold;">/Appl...acOS/</div>
<svg class="a" style="left:898.00px;top:76.59px;" width="10" height="9" viewBox="0 0 10 9"><path d="M0.5 1.5 H3.5 L4.5 2.5 H7.5 V7.5 H0.5 Z" fill="#e9d58f" stroke="#1c1a16" stroke-width="0.6"/><path d="M1.5 4 H9 L7.5 7.5 H0.5 Z" fill="#f7e9b0" stroke="#1c1a16" stroke-width="0.6"/></svg>
<div class="t" style="left:909.60px;top:77.78px;font-size:6.75px;color:#e0e0e0;font-weight:bold;">Project</div>
<svg class="a" style="left:898.00px;top:84.92px;" width="10" height="9" viewBox="0 0 10 9"><path d="M0.5 1.5 H3.5 L4.5 2.5 H7.5 V7.5 H0.5 Z" fill="#e9d58f" stroke="#1c1a16" stroke-width="0.6"/><path d="M1.5 4 H9 L7.5 7.5 H0.5 Z" fill="#f7e9b0" stroke="#1c1a16" stroke-width="0.6"/><circle cx="5.5" cy="2.2" r="2" fill="#6c9fd6"/></svg>
<div class="t" style="left:909.60px;top:86.11px;font-size:6.75px;color:#e0e0e0;font-weight:bold;">Favorite Files</div>
<svg class="a" style="left:898.00px;top:93.25px;" width="10" height="9" viewBox="0 0 10 9"><path d="M0.5 1.5 H3.5 L4.5 2.5 H7.5 V7.5 H0.5 Z" fill="#e9d58f" stroke="#1c1a16" stroke-width="0.6"/><path d="M1.5 4 H9 L7.5 7.5 H0.5 Z" fill="#f7e9b0" stroke="#1c1a16" stroke-width="0.6"/><circle cx="5.8" cy="2.4" r="2.1" fill="#f0f0f0" stroke="#333" stroke-width="0.4"/></svg>
<div class="t" style="left:909.60px;top:94.44px;font-size:6.75px;color:#e0e0e0;font-weight:bold;">Recent Files</div>
<div class="t" style="left:914.80px;top:102.85px;font-size:6.6px;color:#d8d8d8;font-weight:bold;">libb...ylib</div>
<div class="t" style="left:947.90px;top:102.17px;font-size:6.55px;color:#8e8c89;font-weight:bold;">/Users...tures/</div>
<div class="t" style="left:914.80px;top:111.18px;font-size:6.6px;color:#d8d8d8;font-weight:bold;">temp3</div>
<div class="t" style="left:947.90px;top:110.50px;font-size:6.55px;color:#8e8c89;font-weight:bold;">/Users...tures/</div>
<div class="t" style="left:914.80px;top:119.51px;font-size:6.6px;color:#d8d8d8;font-weight:bold;">010...png</div>
<div class="t" style="left:947.90px;top:118.83px;font-size:6.55px;color:#8e8c89;font-weight:bold;">/Users...tures/</div>
<div class="t" style="left:914.80px;top:127.84px;font-size:6.6px;color:#d8d8d8;font-weight:bold;">ida64</div>
<div class="t" style="left:947.90px;top:127.16px;font-size:6.55px;color:#8e8c89;font-weight:bold;">/Appl...acOS/</div>
<div class="t" style="left:914.80px;top:136.17px;font-size:6.6px;color:#d8d8d8;font-weight:bold;">ida</div>
<div class="t" style="left:947.90px;top:135.49px;font-size:6.55px;color:#8e8c89;font-weight:bold;">/Users...o 7.0/</div>
<div class="t" style="left:914.80px;top:144.50px;font-size:6.6px;color:#d8d8d8;font-weight:bold;">ida64</div>
<div class="t" style="left:947.90px;top:143.82px;font-size:6.55px;color:#8e8c89;font-weight:bold;">/Users...o 7.0/</div>
<div class="t" style="left:914.80px;top:152.83px;font-size:6.6px;color:#d8d8d8;font-weight:bold;">libi...ylib</div>
<div class="t" style="left:947.90px;top:152.15px;font-size:6.55px;color:#8e8c89;font-weight:bold;">/Users...o 7.0/</div>
<div class="t" style="left:914.80px;top:161.16px;font-size:6.6px;color:#d8d8d8;font-weight:bold;">libi...ylib</div>
<div class="t" style="left:947.90px;top:160.48px;font-size:6.55px;color:#8e8c89;font-weight:bold;">/Users...o 7.0/</div>
<div class="t" style="left:914.80px;top:169.49px;font-size:6.6px;color:#d8d8d8;font-weight:bold;">ida_....pyc</div>
<div class="t" style="left:947.90px;top:168.81px;font-size:6.55px;color:#8e8c89;font-weight:bold;">/User...thon/</div>
<div class="t" style="left:914.80px;top:177.82px;font-size:6.6px;color:#d8d8d8;font-weight:bold;">ida_....pyc</div>
<div class="t" style="left:947.90px;top:177.14px;font-size:6.55px;color:#8e8c89;font-weight:bold;">/User...ktop/</div>
<div class="t" style="left:914.80px;top:186.15px;font-size:6.6px;color:#d8d8d8;font-weight:bold;">libi...ylib</div>
<div class="t" style="left:947.90px;top:185.47px;font-size:6.55px;color:#8e8c89;font-weight:bold;">/Appl...acOS/</div>
<div class="t" style="left:914.80px;top:194.48px;font-size:6.6px;color:#d8d8d8;font-weight:bold;">libi...ylib</div>
<div class="t" style="left:947.90px;top:193.80px;font-size:6.55px;color:#8e8c89;font-weight:bold;">/Volu...atch/</div>
<div class="a" style="left:896.00px;top:201.90px;width:104.00px;height:10.80px;background:#3c3b37;border-top:0.8px solid #7d7c79"></div>
<div class="a" style="left:896.00px;top:202.20px;width:70.70px;height:10.50px;background:#a4a3a1"></div>
<svg class="a" style="left:898.00px;top:203.20px;" width="10" height="9" viewBox="0 0 10 9"><ellipse cx="5" cy="4.5" rx="3.6" ry="3.8" fill="#e8eef6" stroke="#6a84a8" stroke-width="0.6"/><path d="M3 2.5 h3 v4 h-3 z" fill="#b8cce4"/></svg>
<div class="t" style="left:919.00px;top:205.02px;font-size:6.9px;color:#2e2e2e;">Workspace</div>
<div class="a" style="left:966.70px;top:202.20px;width:17.10px;height:10.50px;background:#383734;border-left:0.8px solid #111"></div>
<svg class="a" style="left:968.50px;top:203.00px;" width="9" height="9" viewBox="0 0 9 9"><path d="M1 0.8 h2 v2 h2 v2 h2 v2 h1 v2 h-7 z" fill="#f0e2a4" stroke="#111" stroke-width="0.4"/></svg>
<div class="t" style="left:993.00px;top:203.19px;font-size:9px;color:#b8b8b8;">›</div>
<div class="a" style="left:896.00px;top:212.70px;width:104.00px;height:1.60px;background:#8d8c8a"></div>
<div class="t" style="left:897.50px;top:215.84px;font-size:8.5px;color:#d0d0d0;">×</div>
<svg class="a" style="left:904.00px;top:218.20px;" width="6" height="4" viewBox="0 0 6 4"><path d="M0.5 0.5 L5.5 0.5 L3 3.5 Z" fill="#d0d0d0"/></svg>
<div class="t" style="left:931.70px;top:216.62px;font-size:6.9px;color:#dadada;font-weight:bold;">Inspector</div>
<div class="a" style="left:896.00px;top:227.00px;width:95.50px;height:10.20px;background:#4b4a47"></div>
<div class="a" style="left:957.80px;top:227.00px;width:0.80px;height:10.20px;background:#3c3b37"></div>
<div class="t" style="left:918.00px;top:228.87px;font-size:6.8px;color:#d6d6d6;font-weight:bold;">Type</div>
<div class="t" style="left:966.00px;top:228.87px;font-size:6.8px;color:#d6d6d6;font-weight:bold;">Value</div>
<div class="a" style="left:896.00px;top:237.20px;width:95.50px;height:10.38px;background:#4a4946;border-bottom:0.8px solid #2e2d2b"></div>
<div class="a" style="left:957.80px;top:237.20px;width:0.80px;height:10.38px;background:#2e2d2b"></div>
<div class="t" style="left:897.00px;top:240.32px;font-size:6.7px;color:#dcdcdc;font-weight:bold;">Binary</div>
<div class="t" style="left:959.50px;top:240.37px;font-size:6.6px;color:#dcdcdc;font-weight:bold;">11001010</div>
<div class="a" style="left:896.00px;top:247.58px;width:95.50px;height:10.38px;background:#3c3b38;border-bottom:0.8px solid #2e2d2b"></div>
<div class="a" style="left:957.80px;top:247.58px;width:0.80px;height:10.38px;background:#2e2d2b"></div>
<div class="t" style="left:897.00px;top:250.70px;font-size:6.7px;color:#dcdcdc;font-weight:bold;">Signed Byte</div>
<div class="t" style="left:959.50px;top:250.75px;font-size:6.6px;color:#dcdcdc;font-weight:bold;">-54</div>
<div class="a" style="left:896.00px;top:257.96px;width:95.50px;height:10.38px;background:#3c3b38;border-bottom:0.8px solid #2e2d2b"></div>
<div class="a" style="left:957.80px;top:257.96px;width:0.80px;height:10.38px;background:#2e2d2b"></div>
<div class="t" style="left:897.00px;top:261.08px;font-size:6.7px;color:#dcdcdc;font-weight:bold;">Unsigned Byte</div>
<div class="t" style="left:959.50px;top:261.13px;font-size:6.6px;color:#dcdcdc;font-weight:bold;">202</div>
<div class="a" style="left:896.00px;top:268.34px;width:95.50px;height:10.38px;background:#3c3b38;border-bottom:0.8px solid #2e2d2b"></div>
<div class="a" style="left:957.80px;top:268.34px;width:0.80px;height:10.38px;background:#2e2d2b"></div>
<div class="t" style="left:897.00px;top:271.46px;font-size:6.7px;color:#dcdcdc;font-weight:bold;">Signed Short</div>
<div class="t" style="left:959.50px;top:271.51px;font-size:6.6px;color:#dcdcdc;font-weight:bold;">-310</div>
<div class="a" style="left:896.00px;top:278.72px;width:95.50px;height:10.38px;background:#3c3b38;border-bottom:0.8px solid #2e2d2b"></div>
<div class="a" style="left:957.80px;top:278.72px;width:0.80px;height:10.38px;background:#2e2d2b"></div>
<div class="t" style="left:897.00px;top:281.84px;font-size:6.7px;color:#dcdcdc;font-weight:bold;">Unsigned Short</div>
<div class="t" style="left:959.50px;top:281.89px;font-size:6.6px;color:#dcdcdc;font-weight:bold;">65226</div>
<div class="a" style="left:896.00px;top:289.10px;width:95.50px;height:10.38px;background:#3c3b38;border-bottom:0.8px solid #2e2d2b"></div>
<div class="a" style="left:957.80px;top:289.10px;width:0.80px;height:10.38px;background:#2e2d2b"></div>
<div class="t" style="left:897.00px;top:292.22px;font-size:6.7px;color:#dcdcdc;font-weight:bold;">Signed Int</div>
<div class="t" style="left:959.50px;top:292.27px;font-size:6.6px;color:#dcdcdc;font-weight:bold;">-10950...</div>
<div class="a" style="left:896.00px;top:299.48px;width:95.50px;height:10.38px;background:#3c3b38;border-bottom:0.8px solid #2e2d2b"></div>
<div class="a" style="left:957.80px;top:299.48px;width:0.80px;height:10.38px;background:#2e2d2b"></div>
<div class="t" style="left:897.00px;top:302.60px;font-size:6.7px;color:#dcdcdc;font-weight:bold;">Unsigned Int</div>
<div class="t" style="left:959.50px;top:302.65px;font-size:6.6px;color:#dcdcdc;font-weight:bold;">319992...</div>
<div class="a" style="left:896.00px;top:309.86px;width:95.50px;height:10.38px;background:#3c3b38;border-bottom:0.8px solid #2e2d2b"></div>
<div class="a" style="left:957.80px;top:309.86px;width:0.80px;height:10.38px;background:#2e2d2b"></div>
<div class="t" style="left:897.00px;top:312.98px;font-size:6.7px;color:#dcdcdc;font-weight:bold;">Signed Int64</div>
<div class="t" style="left:959.50px;top:313.03px;font-size:6.6px;color:#dcdcdc;font-weight:bold;">1441151...</div>
<div class="a" style="left:896.00px;top:320.24px;width:95.50px;height:10.38px;background:#3c3b38;border-bottom:0.8px solid #2e2d2b"></div>
<div class="a" style="left:957.80px;top:320.24px;width:0.80px;height:10.38px;background:#2e2d2b"></div>
<div class="t" style="left:897.00px;top:323.36px;font-size:6.7px;color:#dcdcdc;font-weight:bold;">Unsigned Int64</div>
<div class="t" style="left:959.50px;top:323.41px;font-size:6.6px;color:#dcdcdc;font-weight:bold;">1441151...</div>
<div class="a" style="left:896.00px;top:330.62px;width:95.50px;height:10.38px;background:#3c3b38;border-bottom:0.8px solid #2e2d2b"></div>
<div class="a" style="left:957.80px;top:330.62px;width:0.80px;height:10.38px;background:#2e2d2b"></div>
<div class="t" style="left:897.00px;top:333.74px;font-size:6.7px;color:#dcdcdc;font-weight:bold;">Float</div>
<div class="t" style="left:959.50px;top:333.79px;font-size:6.6px;color:#dcdcdc;font-weight:bold;">-0.3652...</div>
<div class="a" style="left:991.50px;top:227.00px;width:0.80px;height:114.00px;background:#2e2d2b"></div>
<div class="a" style="left:896.00px;top:342.20px;width:104.00px;height:10.50px;background:#3c3b37;border-top:0.8px solid #7d7c79"></div>
<div class="a" style="left:896.00px;top:342.50px;width:65.00px;height:10.20px;background:#a4a3a1"></div>
<svg class="a" style="left:899.00px;top:343.50px;" width="9" height="8" viewBox="0 0 9 8"><path d="M5.5 0.5 L1.5 4.5 H4 L3 7.5 L7.5 3.2 H5 Z" fill="#efe39a"/></svg>
<div class="t" style="left:919.30px;top:345.02px;font-size:6.9px;color:#2e2e2e;">Inspector</div>
<div class="a" style="left:961.00px;top:342.50px;width:22.80px;height:10.20px;background:#3a3936;border-left:0.8px solid #111"></div>
<svg class="a" style="left:964.00px;top:343.50px;" width="9" height="9" viewBox="0 0 9 9"><rect x="1" y="0.8" width="2" height="2" fill="#f0e2a4"/><rect x="3.5" y="3" width="2.2" height="2" fill="#f0e2a4"/><rect x="3.5" y="5.5" width="2.2" height="2" fill="#f0e2a4"/></svg>
<div class="t" style="left:993.00px;top:343.19px;font-size:9px;color:#b8b8b8;">›</div>
<div class="a" style="left:0.00px;top:354.80px;width:1000.00px;height:130.00px;background:#3c3b37"></div>
<div class="a" style="left:895.60px;top:352.50px;width:104.40px;height:1.20px;background:#3c3b37"></div>
<div class="a" style="left:0.00px;top:352.90px;width:1000.00px;height:2.00px;background:#72716e"></div>
<div class="t" style="left:1.50px;top:356.44px;font-size:8.5px;color:#d0d0d0;">×</div>
<svg class="a" style="left:8.50px;top:358.80px;" width="6" height="4" viewBox="0 0 6 4"><path d="M0.5 0.5 L5.5 0.5 L3 3.5 Z" fill="#d0d0d0"/></svg>
<div class="t" style="left:484.00px;top:356.72px;font-size:7.1px;color:#e6e6e6;font-weight:bold;">Compare</div>
<div class="a" style="left:1.70px;top:367.50px;width:22.40px;height:102.20px;background:#6b6a68;border:1.4px solid #d6d5d3;box-shadow:0 -0.6px 0 #111"></div>
<div class="a" style="left:1.70px;top:394.60px;width:22.40px;height:1.30px;background:#d6d5d3"></div>
<div class="a" style="left:1.70px;top:442.60px;width:22.40px;height:1.30px;background:#d6d5d3"></div>
<div class="a" style="left:28.80px;top:367.50px;width:22.80px;height:102.20px;background:#6b6a68;border:1.4px solid #d6d5d3;box-shadow:0 -0.6px 0 #111"></div>
<div class="a" style="left:28.80px;top:394.60px;width:22.80px;height:1.30px;background:#d6d5d3"></div>
<div class="a" style="left:28.80px;top:442.60px;width:22.80px;height:1.30px;background:#d6d5d3"></div>
<div class="a" style="left:24.60px;top:367.30px;width:4.20px;height:102.50px;background:#2e2d2b"></div>
<div class="a" style="left:24.60px;top:381.60px;width:4.20px;height:1.00px;background:#c8c7c5"></div>
<div class="a" style="left:24.60px;top:394.80px;width:4.20px;height:1.00px;background:#c8c7c5"></div>
<div class="a" style="left:24.60px;top:419.30px;width:4.20px;height:1.00px;background:#c8c7c5"></div>
<div class="a" style="left:24.60px;top:443.60px;width:4.20px;height:1.00px;background:#c8c7c5"></div>
<div class="a" style="left:24.60px;top:456.50px;width:4.20px;height:1.00px;background:#c8c7c5"></div>
<div class="a" style="left:52.50px;top:425.00px;width:1.80px;height:1.80px;background:#e0e0e0;border-radius:50%"></div>
<div class="t" style="left:0.00px;top:476.67px;font-size:6.8px;color:#d0d0d0;">5</div>
<svg class="a" style="left:57.50px;top:369.50px;" width="8" height="6" viewBox="0 0 8 6"><path d="M1 1.5 L4 4.5 L7 1.5" stroke="#6e9fd8" stroke-width="1.3" fill="none"/></svg>
<svg class="a" style="left:70.50px;top:369.50px;" width="8" height="6" viewBox="0 0 8 6"><path d="M1 4.5 L4 1.5 L7 4.5" stroke="#6e9fd8" stroke-width="1.3" fill="none"/></svg>
<svg class="a" style="left:83.50px;top:368.50px;" width="8" height="9" viewBox="0 0 8 9"><path d="M1 0.5 H5 L7 2.5 V8.5 H1 Z" fill="#f2f2f2" stroke="#222" stroke-width="0.4"/><circle cx="4.5" cy="5" r="2.2" fill="#5b8fd0"/></svg>
<svg class="a" style="left:96.50px;top:368.50px;" width="8" height="9" viewBox="0 0 8 9"><path d="M1 0.5 H5 L7 2.5 V8.5 H1 Z" fill="#f2f2f2" stroke="#222" stroke-width="0.4"/><circle cx="4.5" cy="5" r="2.2" fill="#5b8fd0"/></svg>
<div class="a" style="left:55.80px;top:379.80px;width:259.80px;height:10.20px;background:#4b4a47"></div>
<div class="a" style="left:107.50px;top:379.80px;width:0.80px;height:62.20px;background:#2e2d2b"></div>
<div class="a" style="left:159.60px;top:379.80px;width:0.80px;height:62.20px;background:#2e2d2b"></div>
<div class="a" style="left:211.20px;top:379.80px;width:0.80px;height:62.20px;background:#2e2d2b"></div>
<div class="a" style="left:263.40px;top:379.80px;width:0.80px;height:62.20px;background:#2e2d2b"></div>
<div class="t" style="left:55.80px;width:51.70px;top:381.57px;font-size:6.9px;color:#d8d8d8;font-weight:bold;text-align:center;padding-left:1px;padding-right:0px">Result</div>
<div class="t" style="left:107.50px;width:52.10px;top:381.57px;font-size:6.9px;color:#d8d8d8;font-weight:bold;text-align:center;padding-left:0px;padding-right:6px">Address A</div>
<div class="t" style="left:159.60px;width:51.60px;top:381.57px;font-size:6.9px;color:#d8d8d8;font-weight:bold;text-align:center;padding-left:0px;padding-right:0px">Size A</div>
<div class="t" style="left:211.20px;width:52.20px;top:381.57px;font-size:6.9px;color:#d8d8d8;font-weight:bold;text-align:center;padding-left:0px;padding-right:0px">Address B</div>
<div class="t" style="left:263.40px;width:52.20px;top:381.57px;font-size:6.9px;color:#d8d8d8;font-weight:bold;text-align:center;padding-left:0px;padding-right:0px">Size B</div>
<svg class="a" style="left:152.00px;top:383.50px;" width="6" height="4" viewBox="0 0 6 4"><path d="M0.8 3.2 L3 1 L5.2 3.2" stroke="#a0a0a0" stroke-width="0.8" fill="none"/></svg>
<div class="a" style="left:55.80px;top:390.00px;width:259.80px;height:10.38px;background:#40628b;border-bottom:0.8px solid #2e2d2b"></div>
<div class="a" style="left:55.80px;top:390.00px;width:10.30px;height:10.38px;background:#3c3b38"></div>
<div class="a" style="left:107.50px;top:390.00px;width:0.80px;height:10.38px;background:#34506f"></div>
<div class="a" style="left:159.60px;top:390.00px;width:0.80px;height:10.38px;background:#34506f"></div>
<div class="a" style="left:211.20px;top:390.00px;width:0.80px;height:10.38px;background:#34506f"></div>
<div class="a" style="left:263.40px;top:390.00px;width:0.80px;height:10.38px;background:#34506f"></div>
<div class="a" style="left:56.40px;top:391.70px;width:9.30px;height:8.40px;background:#696866;border:0.8px solid #9a9996"></div>
<div class="t" style="left:67.70px;top:393.27px;font-size:6.8px;color:#ececec;font-weight:bold;">Match</div>
<div class="t" style="left:109.80px;top:393.29px;font-size:6.75px;color:#ececec;font-weight:bold;">0h</div>
<div class="t" style="left:161.90px;top:393.29px;font-size:6.75px;color:#ececec;font-weight:bold;">137B961h</div>
<div class="t" style="left:213.50px;top:393.29px;font-size:6.75px;color:#ececec;font-weight:bold;">0h</div>
<div class="t" style="left:265.70px;top:393.29px;font-size:6.75px;color:#ececec;font-weight:bold;">137B961h</div>
<div class="a" style="left:55.80px;top:400.38px;width:259.80px;height:10.38px;background:#3c3b38;border-bottom:0.8px solid #2e2d2b"></div>
<div class="a" style="left:107.50px;top:400.38px;width:0.80px;height:10.38px;background:#2e2d2b"></div>
<div class="a" style="left:159.60px;top:400.38px;width:0.80px;height:10.38px;background:#2e2d2b"></div>
<div class="a" style="left:211.20px;top:400.38px;width:0.80px;height:10.38px;background:#2e2d2b"></div>
<div class="a" style="left:263.40px;top:400.38px;width:0.80px;height:10.38px;background:#2e2d2b"></div>
<div class="a" style="left:56.40px;top:402.08px;width:9.30px;height:8.40px;background:#e02424;border:0.8px solid #9a9996"></div>
<div class="t" style="left:68.20px;top:403.65px;font-size:6.8px;color:#ececec;font-weight:bold;">Difference</div>
<div class="t" style="left:109.80px;top:403.67px;font-size:6.75px;color:#ececec;font-weight:bold;">137B961h</div>
<div class="t" style="left:161.90px;top:403.67px;font-size:6.75px;color:#ececec;font-weight:bold;">100h</div>
<div class="t" style="left:213.50px;top:403.67px;font-size:6.75px;color:#ececec;font-weight:bold;">137B961h</div>
<div class="t" style="left:265.70px;top:403.67px;font-size:6.75px;color:#ececec;font-weight:bold;">100h</div>
<div class="a" style="left:55.80px;top:410.76px;width:259.80px;height:10.38px;background:#3c3b38;border-bottom:0.8px solid #2e2d2b"></div>
<div class="a" style="left:107.50px;top:410.76px;width:0.80px;height:10.38px;background:#2e2d2b"></div>
<div class="a" style="left:159.60px;top:410.76px;width:0.80px;height:10.38px;background:#2e2d2b"></div>
<div class="a" style="left:211.20px;top:410.76px;width:0.80px;height:10.38px;background:#2e2d2b"></div>
<div class="a" style="left:263.40px;top:410.76px;width:0.80px;height:10.38px;background:#2e2d2b"></div>
<div class="a" style="left:56.40px;top:412.46px;width:9.30px;height:8.40px;background:#696866;border:0.8px solid #9a9996"></div>
<div class="t" style="left:67.70px;top:414.03px;font-size:6.8px;color:#ececec;font-weight:bold;">Match</div>
<div class="t" style="left:109.80px;top:414.05px;font-size:6.75px;color:#ececec;font-weight:bold;">137BA61h</div>
<div class="t" style="left:161.90px;top:414.05px;font-size:6.75px;color:#ececec;font-weight:bold;">2495DF0h</div>
<div class="t" style="left:213.50px;top:414.05px;font-size:6.75px;color:#ececec;font-weight:bold;">137BA61h</div>
<div class="t" style="left:265.70px;top:414.05px;font-size:6.75px;color:#ececec;font-weight:bold;">2495DF0h</div>
<div class="a" style="left:55.80px;top:421.14px;width:259.80px;height:10.38px;background:#3c3b38;border-bottom:0.8px solid #2e2d2b"></div>
<div class="a" style="left:107.50px;top:421.14px;width:0.80px;height:10.38px;background:#2e2d2b"></div>
<div class="a" style="left:159.60px;top:421.14px;width:0.80px;height:10.38px;background:#2e2d2b"></div>
<div class="a" style="left:211.20px;top:421.14px;width:0.80px;height:10.38px;background:#2e2d2b"></div>
<div class="a" style="left:263.40px;top:421.14px;width:0.80px;height:10.38px;background:#2e2d2b"></div>
<div class="a" style="left:56.40px;top:422.84px;width:9.30px;height:8.40px;background:#e02424;border:0.8px solid #9a9996"></div>
<div class="t" style="left:68.20px;top:424.41px;font-size:6.8px;color:#ececec;font-weight:bold;">Difference</div>
<div class="t" style="left:109.80px;top:424.43px;font-size:6.75px;color:#ececec;font-weight:bold;">3811851h</div>
<div class="t" style="left:161.90px;top:424.43px;font-size:6.75px;color:#ececec;font-weight:bold;">100h</div>
<div class="t" style="left:213.50px;top:424.43px;font-size:6.75px;color:#ececec;font-weight:bold;">3811851h</div>
<div class="t" style="left:265.70px;top:424.43px;font-size:6.75px;color:#ececec;font-weight:bold;">100h</div>
<div class="a" style="left:55.80px;top:431.52px;width:259.80px;height:10.38px;background:#3c3b38;border-bottom:0.8px solid #2e2d2b"></div>
<div class="a" style="left:107.50px;top:431.52px;width:0.80px;height:10.38px;background:#2e2d2b"></div>
<div class="a" style="left:159.60px;top:431.52px;width:0.80px;height:10.38px;background:#2e2d2b"></div>
<div class="a" style="left:211.20px;top:431.52px;width:0.80px;height:10.38px;background:#2e2d2b"></div>
<div class="a" style="left:263.40px;top:431.52px;width:0.80px;height:10.38px;background:#2e2d2b"></div>
<div class="a" style="left:56.40px;top:433.22px;width:9.30px;height:8.40px;background:#696866;border:0.8px solid #9a9996"></div>
<div class="t" style="left:67.70px;top:434.79px;font-size:6.8px;color:#ececec;font-weight:bold;">Match</div>
<div class="t" style="left:109.80px;top:434.81px;font-size:6.75px;color:#ececec;font-weight:bold;">3811951h</div>
<div class="t" style="left:161.90px;top:434.81px;font-size:6.75px;color:#ececec;font-weight:bold;">1374ECFh</div>
<div class="t" style="left:213.50px;top:434.81px;font-size:6.75px;color:#ececec;font-weight:bold;">3811951h</div>
<div class="t" style="left:265.70px;top:434.81px;font-size:6.75px;color:#ececec;font-weight:bold;">1374ECFh</div>
<div class="a" style="left:55.80px;top:442.00px;width:259.80px;height:0.80px;background:#2e2d2b"></div>
<div class="t" style="left:205.00px;top:371.19px;font-size:6.56px;color:#dcdcdc;font-weight:bold;">/Applications/Binary Ninja.app/Contents/MacOS/libbinaryninjacore.1.dylib.bak</div>
<div class="t" style="left:547.60px;top:371.17px;font-size:6.6px;color:#dcdcdc;font-weight:bold;">vs.</div>
<div class="t" style="left:663.40px;top:371.18px;font-size:6.58px;color:#dcdcdc;font-weight:bold;">/Applications/Binary Ninja.app/Contents/MacOS/libbinaryninjacore.1.dylib</div>
<div class="a" style="left:0.00px;top:484.10px;width:1000.00px;height:1.00px;background:#a4a3a1"></div>
<div class="a" style="left:0.00px;top:485.10px;width:1000.00px;height:9.60px;background:#3c3b37"></div>
<div class="a" style="left:204.40px;top:485.30px;width:64.60px;height:9.30px;background:#a9a8a6"></div>
<div class="a" style="left:0.00px;top:494.60px;width:1000.00px;height:1.00px;background:#5f5e5b"></div>
<div class="a" style="left:0.00px;top:495.60px;width:1000.00px;height:13.40px;background:#2f2e2c"></div>
<div class="t" style="left:23.00px;top:486.57px;font-size:6.6px;color:#d6d6d6;font-weight:bold;">Output</div>
<div class="t" style="left:80.60px;top:486.57px;font-size:6.6px;color:#d6d6d6;font-weight:bold;">Find Results</div>
<div class="t" style="left:154.60px;top:486.57px;font-size:6.6px;color:#d6d6d6;font-weight:bold;">Find in Files</div>
<div class="t" style="left:228.00px;top:486.57px;font-size:6.6px;color:#2a2a2a;font-weight:bold;">Compare</div>
<div class="t" style="left:291.60px;top:486.57px;font-size:6.6px;color:#d6d6d6;font-weight:bold;">Histogram</div>
<div class="t" style="left:360.00px;top:486.57px;font-size:6.6px;color:#d6d6d6;font-weight:bold;">Checksum</div>
<div class="t" style="left:429.00px;top:486.57px;font-size:6.6px;color:#d6d6d6;font-weight:bold;">Process</div>
<div class="t" style="left:489.80px;top:486.57px;font-size:6.6px;color:#d6d6d6;font-weight:bold;">Disassembler</div>
<div class="t" style="left:2.00px;top:499.92px;font-size:6.9px;color:#d0d0d0;font-weight:bold;">Selected: 20429153 [137B961h] bytes (Range: 0 [0h] to 20429152 [137B960h])</div>
<div class="t" style="left:718.00px;top:500.13px;font-size:6.47px;color:#d0d0d0;font-weight:bold;">Start: 0 [0h]   Sel: 20429153 [137B961h]   Size: 79,194,144</div>
<svg class="a" style="left:0;top:484px" width="540" height="12" viewBox="0 484 540 12"><path d="M4.5 487.5 H8.5 M4.5 492.5 H8.5" stroke="#7ea9da" stroke-width="1.4"/><path d="M7.5 486 L10.8 490 L7.5 494" fill="none" stroke="#7ea9da" stroke-width="1.4"/><path d="M3.8 490 H9" stroke="#5d86b8" stroke-width="1"/><line x1="64" y1="490.5" x2="68.5" y2="493.8" stroke="#efe2a8" stroke-width="1.1"/><circle cx="63.5" cy="488.8" r="2.6" fill="#f4f4f4" stroke="#111" stroke-width="0.5"/><rect x="60.5" y="491.5" width="2" height="2.5" fill="#5d7b9c"/><path d="M139.5 486.5 L143 490 L139.5 493.5" fill="none" stroke="#efe2a8" stroke-width="1.2"/><circle cx="137.5" cy="489" r="2.5" fill="#f4f4f4" stroke="#111" stroke-width="0.5"/><rect x="135.5" y="491.5" width="2" height="2.5" fill="#5d7b9c"/><text x="209.2" y="493.2" font-size="10" font-weight="bold" fill="#f7e070" font-family="Liberation Sans">?</text><rect x="208" y="492.3" width="2" height="2.2" fill="#7a98b8"/><path d="M272.8 485.5 V493.8 H280" fill="none" stroke="#efe2a8" stroke-width="0.9"/><path d="M274 493 L275.8 487 L277.5 490 L279.5 493 Z" fill="#8cb8e8"/><rect x="272" y="492.5" width="8" height="1" fill="#d0e0f0"/><path d="M347.5 486.5 H343 L345.8 489.8 L343 493 H347.5" fill="none" stroke="#8cb8e8" stroke-width="1.3"/><rect x="340.5" y="491.5" width="1.8" height="2.5" fill="#6f9ad0"/><path d="M408.5 493.5 C409 489 411 486.5 417.5 486.5 L416.5 488.5 L413.5 488.5 L415.5 489.5 C413 490 411 491 410.5 493.5 Z" fill="#8cb4e0"/><rect x="469" y="486.5" width="1.8" height="7.5" fill="#7ea9da"/><text x="470.5" y="491.5" font-size="4.5" font-weight="bold" fill="#7ea9da" font-family="Liberation Sans">ov</text></svg>
<svg class="a" style="left:880px;top:440px" width="120" height="69" viewBox="880 440 120 69"><polygon points="965.8,488.0 966.1,490.6 970.0,493.9 964.7,495.5 964.0,498.0 963.1,500.4 960.6,501.9 962.4,506.5 958.4,506.7 956.7,508.8 953.3,508.6 951.4,510.4 950.1,513.7 947.1,513.8 944.4,514.1 941.5,512.5 939.0,515.5 935.9,518.4 933.6,514.0 931.1,513.2 929.1,511.0 927.0,509.6 922.1,512.3 922.8,507.0 920.6,505.7 918.8,504.0 917.8,501.6 912.4,501.7 914.2,497.9 912.1,495.9 912.5,493.1 911.7,490.6 908.8,488.0 911.6,485.4 912.7,483.0 913.9,480.7 912.6,477.5 910.9,473.5 915.6,473.0 917.6,471.1 920.3,470.0 922.4,468.6 922.6,464.3 926.9,466.3 928.3,463.2 931.3,463.4 933.5,461.4 936.1,459.4 939.0,460.6 941.8,461.0 944.0,464.0 946.6,464.0 951.1,459.9 951.7,465.2 954.9,465.1 955.9,468.1 957.1,470.6 962.7,469.3 962.2,473.1 962.2,476.1 962.7,478.5 964.3,480.6 970.1,482.0 966.7,485.4" fill="#070707"/><path d="M922 468 L917 456 M930 464 L928 452 M950 463 L954 456 M958 470 L965 465" stroke="#070707" stroke-width="1" fill="none"/><circle cx="899" cy="467" r="0.9" fill="#070707"/><circle cx="905" cy="464" r="1.0" fill="#070707"/><circle cx="910" cy="470" r="0.8" fill="#070707"/><circle cx="903" cy="472" r="0.6" fill="#070707"/><circle cx="915" cy="461" r="0.7" fill="#070707"/><circle cx="963" cy="467" r="1" fill="#070707"/><circle cx="967" cy="473" r="0.8" fill="#070707"/><circle cx="912" cy="500" r="1.6" fill="#070707"/><circle cx="966" cy="505" r="1.8" fill="#070707"/><circle cx="914" cy="480" r="1.2" fill="#070707"/><circle cx="982" cy="464.5" r="5" fill="#070707"/><circle cx="987.5" cy="469.5" r="2.6" fill="#070707"/><circle cx="978.5" cy="460" r="2" fill="#070707"/><circle cx="991" cy="473" r="1" fill="#070707"/><circle cx="980" cy="499" r="9" fill="#b0191a"/><circle cx="990" cy="491" r="6" fill="#b0191a"/><circle cx="972" cy="494" r="4" fill="#b0191a"/><circle cx="995" cy="486" r="3" fill="#b0191a"/><circle cx="986" cy="506" r="5" fill="#b0191a"/><path d="M918 476 h4 M920 474.5 v9 M918 480 l2 -2 l2 2 M923 475 h4 v3 h-4 z M923 479.5 h4.5 M924 481 l1 2 M927 481 l-1 2 M929.5 475.8 h9.5 M932.5 474.3 v3 M936.0 474.3 v3 M932.0 478 l-2 5 M931.5 480 v3.5 M934.5 478.5 v4.5 h4 M938.0 478.5 l-3 2.5 M941 477 h3.5 M943 474.5 v9 l-1.5 -1 M941 481 l3 -1.5 M945.5 475.5 h5 M948 474.3 v1.2 M946 477.5 h4.5 M945.5 479.5 h5.5 M949 478.5 l-3 5 M946.5 481 l4 2.5 M952.5 477 h10 M957.5 474.3 v9.5 M957.0 477.5 l-4.5 5 M958.0 477.5 l4.5 5 M954.5 475 l1 1.2" stroke="#f2f2f2" stroke-width="1.3" fill="none" stroke-linecap="square"/><text x="912" y="498.8" font-size="14" font-style="italic" fill="#f4f4f4" font-family="Liberation Sans" textLength="54" lengthAdjust="spacingAndGlyphs">M<tspan fill="#d02020">a</tspan>c-GM</text><text x="966.5" y="498.5" font-size="7" font-weight="bold" fill="#f4f4f4" font-family="Liberation Sans" textLength="19" lengthAdjust="spacingAndGlyphs">.com</text></svg>
<div class="t" style="left:913.00px;top:500.36px;font-size:6.0px;color:#c8c8c8;font-weight:bold;">Hex</div>
<div class="t" style="left:952.00px;top:500.36px;font-size:6.0px;color:#c8c8c8;font-weight:bold;">Lit</div>
<div class="t" style="left:986.50px;top:500.16px;font-size:6.4px;color:#d8d8d8;font-weight:bold;">INS</div></body></html>
